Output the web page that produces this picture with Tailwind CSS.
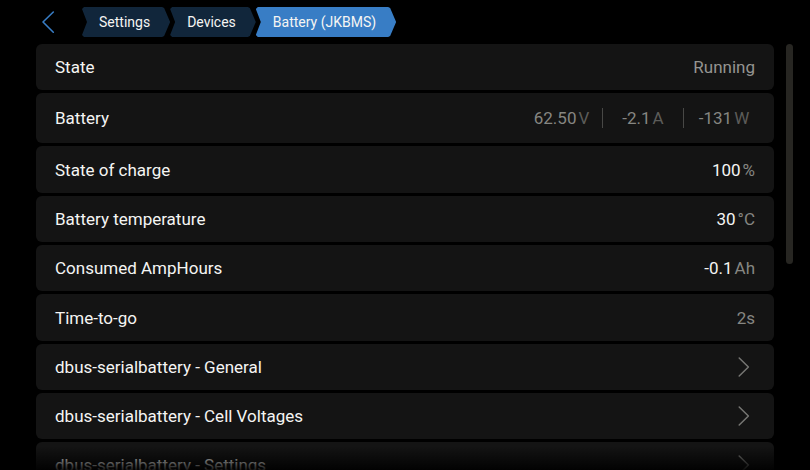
<!DOCTYPE html>
<html lang="en" class="h-full">
<head>
<meta charset="utf-8">
<meta name="viewport" content="width=device-width, initial-scale=1">
<title>Battery (JKBMS)</title>
<script src="https://cdn.jsdelivr.net/npm/@tailwindcss/browser@4"></script>
</head>
<body class="relative h-screen overflow-hidden bg-black font-[Roboto,sans-serif] text-[17px] leading-6 text-[#f5f5f3]">
<div class="flex h-full flex-col">
  <header class="flex shrink-0 items-center pt-[7px] pb-[7px] pl-9">
    <button type="button" aria-label="Back" class="mr-[22px] flex h-[30px] w-6 items-center justify-center">
      <svg class="h-6 w-6" viewBox="0 0 24 24" fill="none" stroke="#387dc5" stroke-width="1.6" stroke-linecap="round" stroke-linejoin="round" aria-hidden="true"><path d="M17.3 2L7 12L17.3 22.2"/></svg>
    </button>
    <nav aria-label="Breadcrumb" class="flex text-sm">
      <a href="#" class="flex h-[30px] items-center bg-[#11263b] pr-5 pl-[17px] [clip-path:polygon(0_2px,2px_0,calc(100%-8px)_0,calc(100%-6px)_1px,100%_50%,calc(100%-6px)_calc(100%-1px),calc(100%-8px)_100%,2px_100%,0_calc(100%-2px),5px_50%)]">Settings</a>
      <a href="#" class="flex h-[30px] items-center bg-[#11263b] pr-5 pl-[17px] [clip-path:polygon(0_2px,2px_0,calc(100%-8px)_0,calc(100%-6px)_1px,100%_50%,calc(100%-6px)_calc(100%-1px),calc(100%-8px)_100%,2px_100%,0_calc(100%-2px),5px_50%)]">Devices</a>
      <a href="#" aria-current="page" class="flex h-[30px] items-center bg-[#387dc5] pr-5 pl-[17px] [clip-path:polygon(0_2px,2px_0,calc(100%-8px)_0,calc(100%-6px)_1px,100%_50%,calc(100%-6px)_calc(100%-1px),calc(100%-8px)_100%,2px_100%,0_calc(100%-2px),5px_50%)]">Battery (JKBMS)</a>
    </nav>
  </header>
  <main class="flex min-h-0 flex-1 pr-[17px] pl-9">
    <ul class="flex min-w-0 flex-1 flex-col gap-[3px] overflow-hidden">
      <li class="flex h-[46px] shrink-0 items-center justify-between rounded-md bg-[#141414] px-[19px]"><span>State</span><span class="text-[#959591]">Running</span></li>
      <li class="flex h-[50px] shrink-0 items-center justify-between rounded-md bg-[#141414] pr-[10px] pl-[19px]">
        <span>Battery</span>
        <span class="flex items-center text-[#868682]">
          <span class="flex h-5 w-[81px] items-center justify-center gap-[2px]">62.50<span class="text-[#5c5c59]">V</span></span>
          <span class="flex h-5 w-[81px] items-center justify-center gap-[2px] border-l border-[#484846]">-2.1<span class="text-[#5c5c59]">A</span></span>
          <span class="flex h-5 w-[81px] items-center justify-center gap-[2px] border-l border-[#484846]">-131<span class="text-[#5c5c59]">W</span></span>
        </span>
      </li>
      <li class="flex h-[47px] shrink-0 items-center justify-between rounded-md bg-[#141414] px-[19px]"><span>State of charge</span><span class="flex gap-[2px]">100<span class="text-[#868682]">%</span></span></li>
      <li class="flex h-[46px] shrink-0 items-center justify-between rounded-md bg-[#141414] px-[19px]"><span>Battery temperature</span><span class="flex gap-[2px]">30<span class="text-[#868682]">°C</span></span></li>
      <li class="flex h-[46px] shrink-0 items-center justify-between rounded-md bg-[#141414] px-[19px]"><span>Consumed AmpHours</span><span class="flex gap-[2px]">-0.1<span class="text-[#868682]">Ah</span></span></li>
      <li class="flex h-[47px] shrink-0 items-center justify-between rounded-md bg-[#141414] px-[19px]"><span>Time-to-go</span><span class="text-[#868682]">2s</span></li>
      <li class="shrink-0"><a href="#" class="flex h-[46px] items-center justify-between rounded-md bg-[#141414] px-[19px]">dbus-serialbattery - General
        <svg class="h-6 w-6" viewBox="0 0 24 24" fill="none" stroke="#767673" stroke-width="1.5" stroke-linecap="round" stroke-linejoin="round" aria-hidden="true"><path d="M8.2 3L17.4 12L8.2 21"/></svg></a></li>
      <li class="shrink-0"><a href="#" class="flex h-[46px] items-center justify-between rounded-md bg-[#141414] px-[19px]">dbus-serialbattery - Cell Voltages
        <svg class="h-6 w-6" viewBox="0 0 24 24" fill="none" stroke="#767673" stroke-width="1.5" stroke-linecap="round" stroke-linejoin="round" aria-hidden="true"><path d="M8.2 3L17.4 12L8.2 21"/></svg></a></li>
      <li class="shrink-0"><a href="#" class="flex h-[46px] items-center justify-between rounded-md bg-[#141414] px-[19px]">dbus-serialbattery - Settings
        <svg class="h-6 w-6" viewBox="0 0 24 24" fill="none" stroke="#767673" stroke-width="1.5" stroke-linecap="round" stroke-linejoin="round" aria-hidden="true"><path d="M8.2 3L17.4 12L8.2 21"/></svg></a></li>
    </ul>
    <div class="ml-3 h-[220px] w-[7px] rounded-full bg-[#272622]"></div>
  </main>
</div>
<div class="pointer-events-none absolute inset-x-0 bottom-0 h-6 bg-linear-to-b from-transparent to-black/90"></div>
</body>
</html>
